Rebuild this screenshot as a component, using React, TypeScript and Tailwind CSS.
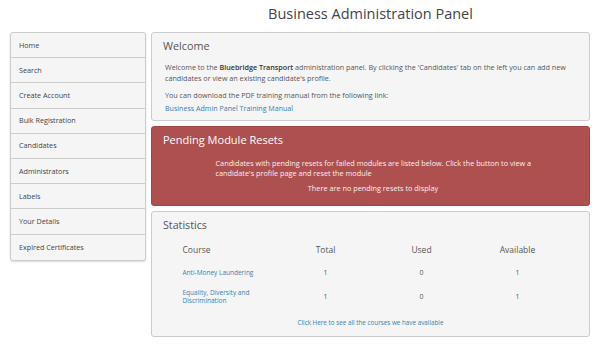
import React from 'react';

const menuItems = [
  'Home',
  'Search',
  'Create Account',
  'Bulk Registration',
  'Candidates',
  'Administrators',
  'Labels',
  'Your Details',
  'Expired Certificates',
];

const courses = [
  { name: 'Anti-Money Laundering', total: 1, used: 0, available: 1 },
  { name: 'Equality, Diversity and Discrimination', total: 1, used: 0, available: 1 },
];

export default function App() {
  return (
    <div className="w-[600px] h-[346px] bg-white text-[#555] font-['Open_Sans',sans-serif] overflow-hidden">
      <div className="flex">
        <div className="w-[151px]" />
        <h1 className="flex-1 text-center text-[14.5px] leading-[28px] text-[#444] mr-[10px]">
          Business Administration Panel
        </h1>
      </div>

      <div className="flex items-start gap-[5px] px-[10px] pt-[4px]">
        {/* Sidebar */}
        <ul className="w-[136px] bg-[#f5f5f5] border border-[#ccc] rounded-[3px] shadow-[0_1px_2px_rgba(0,0,0,0.15)]">
          {menuItems.map((item, i) => (
            <li
              key={item}
              className={`h-[25.2px] flex items-center pl-[8px] text-[7.2px] text-[#444] ${
                i < menuItems.length - 1 ? 'border-b border-[#ccc]' : ''
              }`}
            >
              {item}
            </li>
          ))}
        </ul>

        {/* Main */}
        <div className="flex-1 flex flex-col gap-[5px]">
          {/* Welcome */}
          <div className="h-[89px] bg-[#f5f5f5] border border-[#ccc] rounded-[3px] px-[11px]">
            <h2 className="text-[10.8px] leading-[26px] text-[#555]">Welcome</h2>
            <p className="text-[7.2px] leading-[11px] mt-[3px] px-[2px]">
              Welcome to the <b className="font-semibold text-[#333]">Bluebridge Transport</b> administration panel.
              By clicking the 'Candidates' tab on the left you can add new candidates or view an existing
              candidate's profile.
            </p>
            <p className="text-[7.2px] leading-[11px] mt-[6px] px-[2px]">
              You can download the PDF training manual from the following link:
            </p>
            <a className="block text-[7.1px] leading-[11px] mt-[2px] px-[2px] text-[#3b7fb0]">
              Business Admin Panel Training Manual
            </a>
          </div>

          {/* Pending resets */}
          <div className="h-[80px] bg-[#ae5050] border border-[#a04646] rounded-[3px] px-[11px] text-white">
            <h2 className="text-[11px] leading-[26px]">Pending Module Resets</h2>
            <p className="w-[322px] mx-auto text-[7.3px] leading-[9.5px] mt-[6px] pl-[6px] text-[#fbeeee]">
              Candidates with pending resets for failed modules are listed below. Click the button to view a
              candidate's profile page and reset the module
            </p>
            <p className="text-center text-[7.3px] leading-[10px] mt-[5px] text-[#fbeeee] pl-[5px]">
              There are no pending resets to display
            </p>
          </div>

          {/* Statistics */}
          <div className="h-[126px] bg-[#f5f5f5] border border-[#ccc] rounded-[3px] px-[11px]">
            <h2 className="text-[10.7px] leading-[26px] text-[#555]">Statistics</h2>
            <table className="w-[384px] mx-auto mt-[6px] table-fixed relative left-[3px]">
              <thead>
                <tr className="text-[8.5px] text-[#555]">
                  <th className="w-[96px] text-left font-normal pl-[1px] pb-[13px] leading-[12px]">Course</th>
                  <th className="w-[96px] font-normal pb-[13px] leading-[12px]">Total</th>
                  <th className="w-[96px] font-normal pb-[13px] leading-[12px]">Used</th>
                  <th className="w-[96px] font-normal pb-[13px] leading-[12px]">Available</th>
                </tr>
              </thead>
              <tbody>
                {courses.map((c, i) => (
                  <tr key={c.name} className="text-[7px] leading-[8px]">
                    <td className={`text-left pl-[1px] text-[6.5px] text-[#3b7fb0] align-middle ${i === 0 ? 'pb-[12px]' : 'pb-[13px]'}`}>
                      {c.name}
                    </td>
                    <td className={`text-center align-middle ${i === 0 ? 'pb-[12px]' : 'pb-[13px]'}`}>{c.total}</td>
                    <td className={`text-center align-middle ${i === 0 ? 'pb-[12px]' : 'pb-[13px]'}`}>{c.used}</td>
                    <td className={`text-center align-middle ${i === 0 ? 'pb-[12px]' : 'pb-[13px]'}`}>{c.available}</td>
                  </tr>
                ))}
              </tbody>
            </table>
            <p className="text-center text-[6.3px] leading-[10px] text-[#3b7fb0]">
              Click Here to see all the courses we have available
            </p>
          </div>
        </div>
      </div>
    </div>
  );
}
